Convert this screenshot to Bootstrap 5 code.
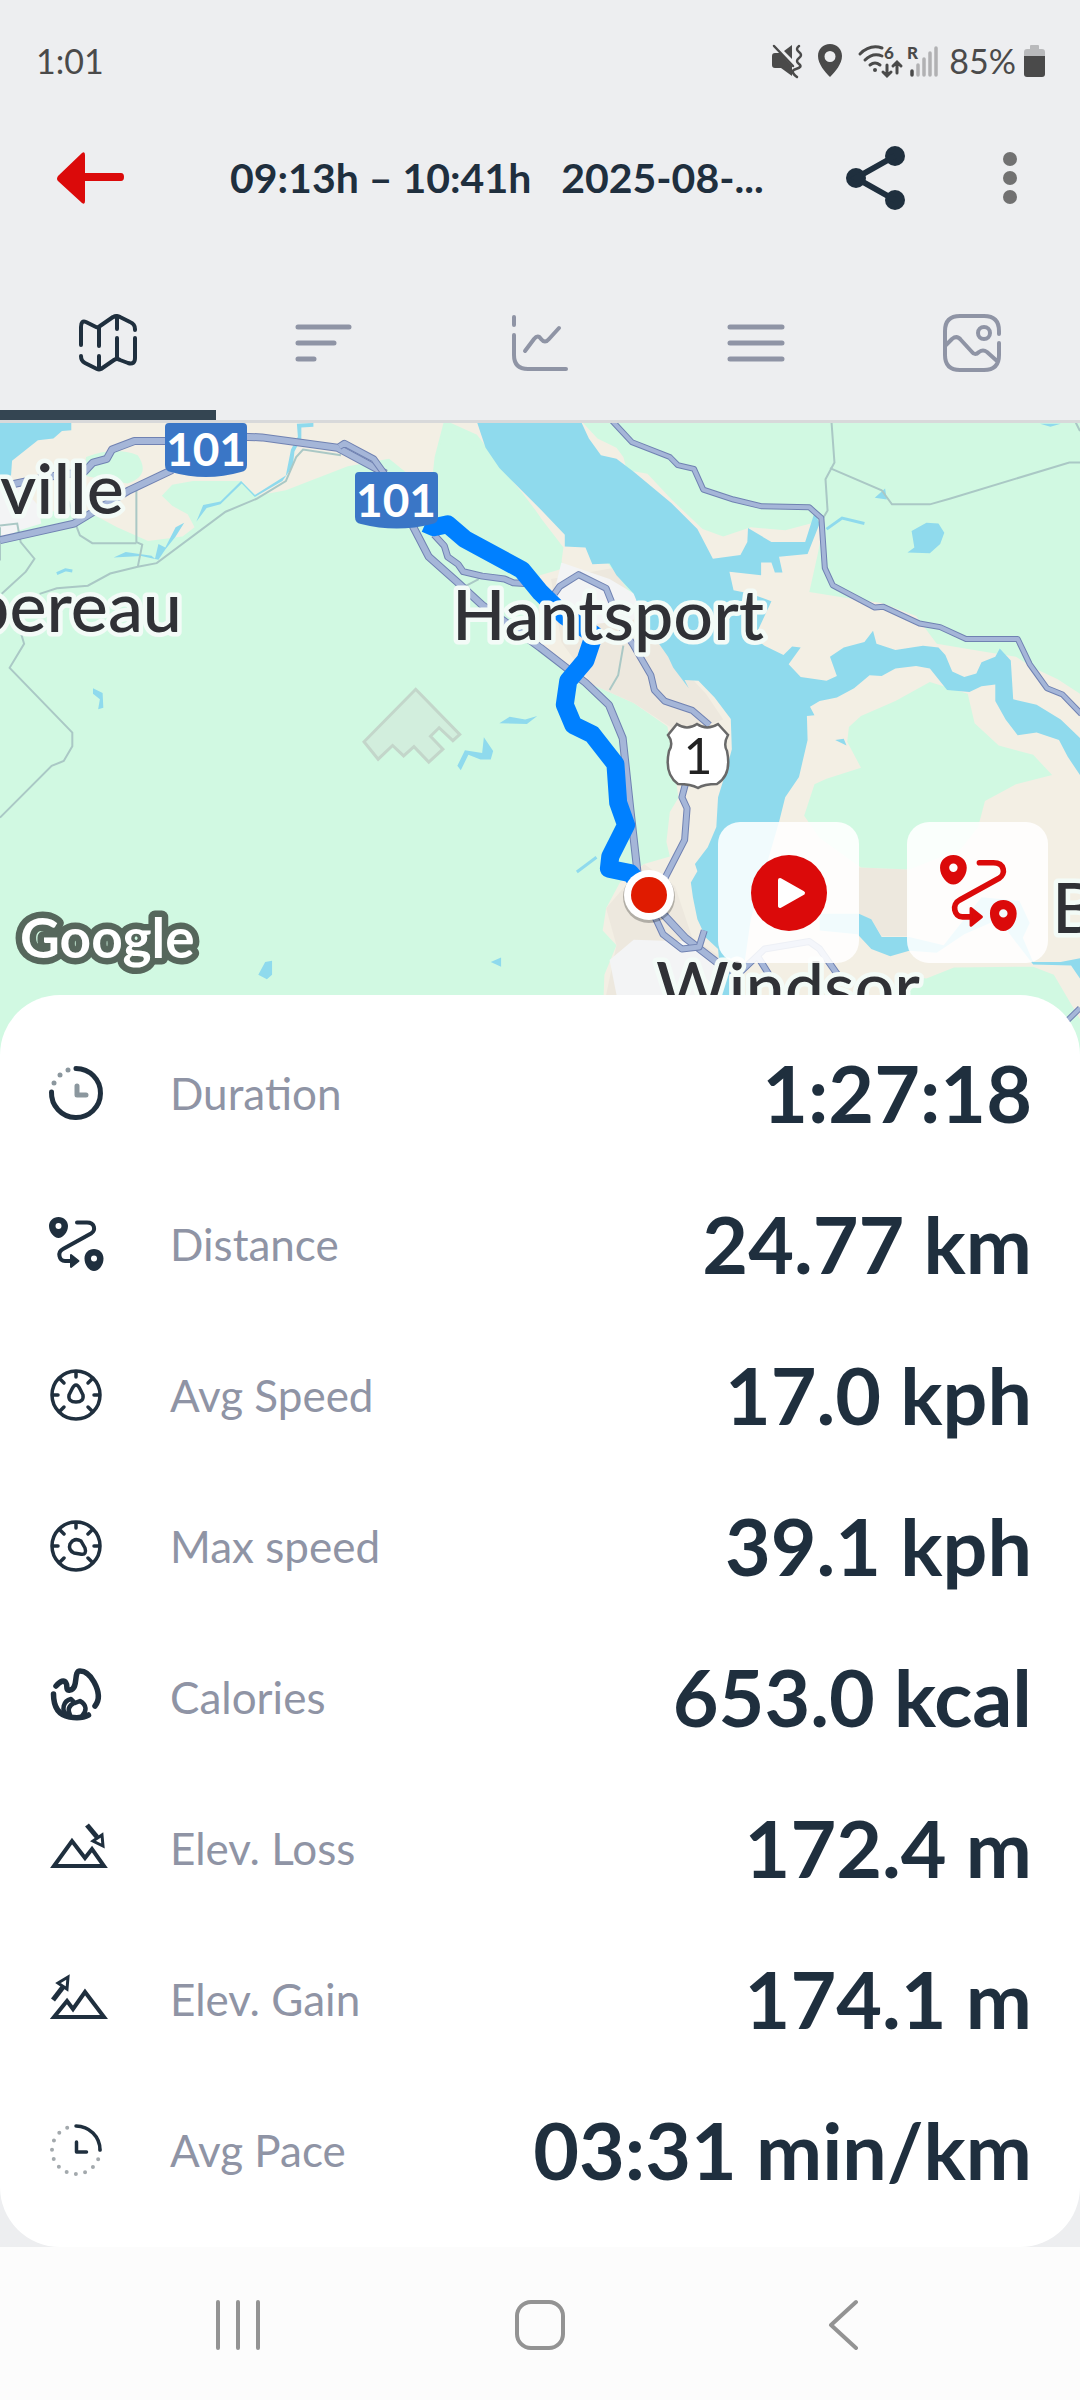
<!DOCTYPE html>
<html lang="en">
<head>
<meta charset="utf-8">
<meta name="viewport" content="width=device-width, initial-scale=1">
<title>Ride details</title>
<link href="https://cdn.jsdelivr.net/npm/bootstrap@5.3.0/dist/css/bootstrap.min.css" rel="stylesheet">
<script src="https://cdn.jsdelivr.net/npm/bootstrap@5.3.0/dist/js/bootstrap.bundle.min.js" defer></script>
<style>
:root{--ink:#1f2f3e;--muted:#8f94a5;--shell:#edeef0;--accent:#db0a0a}
body{font-family:Lato,"Open Sans",sans-serif;background:var(--shell);color:var(--ink)}
svg{display:block;flex:none}
button,a{color:inherit}
.status-bar{height:122px;padding:0 34px 0 36px;color:#4a4a4a;font-size:34px;line-height:40px}
.top-bar{height:112px;padding:0 46px 0 56px}
.ride-title{font-size:41px;line-height:56px;font-weight:700;margin:0;padding-left:106px}
.top-actions{gap:68px}
.plain-btn{background:none;border:0;padding:0}
.tab-strip{border-bottom:3px solid #d8d9da}
.tab-strip .nav-link{height:186px;padding:80px 0 0;border-radius:0;border-bottom:10px solid transparent;color:var(--muted)}
.tab-strip .nav-link.active{color:var(--ink);background:none;border-bottom-color:#344552}
.map-view{height:647px;background:#d1f9e2}
.map-shapes *{vector-effect:non-scaling-stroke}
.map-tools{right:32px;top:399px;gap:48px}
.map-tool{width:141px;height:141px;border:0;border-radius:22px;background:rgba(255,255,255,.88);color:var(--accent)}
.sheet{margin-top:-75px;border-radius:60px;padding:22px 48px 22px 44px}
.stat-row{height:151px;gap:62px}
.stat-name{font-size:44px;line-height:56px;color:var(--muted)}
.stat-value{font-size:79px;line-height:96px;font-weight:700;white-space:nowrap}
.system-nav{height:153px;padding:0 87px;background:#fcfcfc;color:#939393}
.place{font-size:70px;font-weight:500;fill:#303136;stroke:#f3fbf7;stroke-width:9;stroke-linejoin:round;paint-order:stroke}
.route-no{font-size:46px;font-weight:700;fill:#fff;text-anchor:middle}
.maker{font-size:55px;font-weight:700;fill:#fff;stroke:#56675c;stroke-width:13;stroke-linejoin:round;paint-order:stroke}
</style>
</head>
<body class="d-flex flex-column min-vh-100">
<svg width="0" height="0" class="position-absolute" aria-hidden="true">
  <symbol id="route" viewBox="0 0 64 64">
    <path fill="currentColor" fill-rule="evenodd" d="M14.500 5c5.500 0 9.500 4 9.500 9 0 6-5 12-9.500 12S5 20 5 14c0-5 4-9 9.500-9zm0 6a3 3 0 1 0 0 6 3 3 0 0 0 0-6zM50 37c5.500 0 9.500 4 9.500 9.500C59.500 53 55 59 50 59s-9.500-6-9.500-12.500C40.500 41 44.500 37 50 37zm0 6.500a3 3 0 1 0 0 6 3 3 0 0 0 0-6z"/>
    <path fill="none" stroke="currentColor" stroke-width="4" stroke-linecap="round" stroke-linejoin="round" d="M33 10.500H43c8 0 9 8 4 11L19 37c-6 3-4 12 2 12h8"/>
    <path fill="currentColor" stroke="currentColor" stroke-width="2" stroke-linejoin="round" d="M27 43l7.500 6-7.500 6z"/>
  </symbol>
  <symbol id="gauge" viewBox="0 0 64 64">
    <g fill="none" stroke="currentColor" stroke-width="3.500" stroke-linecap="round"><circle cx="32" cy="32" r="24"/><path d="M32 9v5M9 32h5M50 32h5M16 16l4 4M48 16l-4 4M16 48l4-4M48 48l-4-4"/></g>
  </symbol>
</svg>

<header>
  <div class="status-bar d-flex align-items-center justify-content-between">
    <span>1:01</span>
    <div class="d-flex align-items-center">
      <svg width="178" height="40" viewBox="0 0 178 40" fill="none" stroke="#4a4a4a" stroke-width="2.500" stroke-linecap="round">
        <path fill="#4a4a4a" stroke="none" d="M1 15q0-3 3-3h5L21 25v10L10 27H4q-3 0-3-3zM13 10l8-6v14z"/><path stroke-width="2.500" d="M3 5l19 20"/><path d="M28 5q-4 3 0 6t0 6 0 6-3 5 1 8"/>
        <path fill="#4a4a4a" stroke="none" fill-rule="evenodd" d="M59 3c7 0 12 5 12 12 0 8-7 16-12 21-5-5-12-13-12-21C47 8 52 3 59 3zm0 7a5.500 5.500 0 1 0 0 11 5.500 5.500 0 0 0 0-11z"/>
        <g stroke-width="3"><path d="M89 13q10-10 22-6M94 19q8-8 17-4M99 24q5-4 10 0M116 24v10m-4-3l4 4 4-4M126 32V22m-4 3l4-4 4 4"/></g><circle cx="104" cy="29" r="2" fill="#4a4a4a" stroke="none"/>
        <g stroke="none" fill="#4a4a4a" font-size="17" font-weight="900"><text x="113" y="18">6</text><text x="136" y="18">R</text></g>
        <g stroke="#b1b1b3" stroke-width="3.500"><path d="M147 24v10M153 18v16M159 12v22M165 7v27"/></g><path stroke-width="3.500" d="M141 30v4"/>
      </svg>
      <span class="me-2">85%</span>
      <svg width="22" height="34" viewBox="0 0 22 34"><path fill="#b9babc" d="M6 5V2q0-1 1-1h7q1 0 1 1v3h3q3 0 3 3v8H0V8q0-3 3-3z"/><path fill="#4a4a4a" d="M0 12h21v18q0 3-3 3H3q-3 0-3-3z"/></svg>
    </div>
  </div>
  <div class="top-bar d-flex align-items-center">
    <button class="plain-btn" aria-label="Back"><svg width="68" height="56" viewBox="0 0 68 56"><path fill="#db0a0a" d="M2 26L26 3q3-2 3 2v18h36q3 0 3 4t-3 4H29v20q0 4-3 2L2 31q-2-2 0-5z"/></svg></button>
    <h1 class="ride-title flex-grow-1 text-truncate">09:13h – 10:41h&nbsp;&nbsp; 2025-08-...</h1>
    <div class="top-actions d-flex align-items-center">
      <button class="plain-btn" aria-label="Share"><svg width="62" height="66" viewBox="0 0 62 66"><g fill="#1f2f3e"><circle cx="12" cy="33" r="10"/><circle cx="51" cy="11" r="10"/><circle cx="51" cy="55" r="10"/></g><path d="M51 11L12 33l39 22" fill="none" stroke="#1f2f3e" stroke-width="6"/></svg></button>
      <button class="plain-btn" aria-label="More options"><svg width="60" height="60" viewBox="0 0 60 60" fill="#717171"><circle cx="36" cy="11" r="7"/><circle cx="36" cy="30" r="7"/><circle cx="36" cy="49" r="7"/></svg></button>
    </div>
  </div>
  <nav class="tab-strip nav nav-fill" aria-label="Ride views">
    <a class="nav-link nav-item active d-flex justify-content-center col" href="#map" aria-label="Map"><svg width="58" height="58" viewBox="0 0 58 58" fill="none" stroke="currentColor" stroke-width="4" stroke-linecap="round" stroke-linejoin="round"><path d="M2 31V13q0-7 5-5l10 5q2 1 4-1l13-9q4-2 7 0l10 5q5 2 5 7v1M20 14v18M38 3v12M2 42q0 5 4 7l12 6q2 1 4 0l13-9q3-2 6 0l8 3q7 2 7-5V24M20 42v13M38 24v21"/></svg></a>
    <a class="nav-link nav-item d-flex justify-content-center col" href="#laps" aria-label="Laps"><svg width="58" height="58" viewBox="0 0 58 58" fill="none" stroke="currentColor" stroke-width="5" stroke-linecap="round"><path d="M3 13h51M3 29h36M3 45h16"/></svg></a>
    <a class="nav-link nav-item d-flex justify-content-center col" href="#charts" aria-label="Charts"><svg width="58" height="58" viewBox="0 0 58 58" fill="none" stroke="currentColor" stroke-width="4" stroke-linecap="round" stroke-linejoin="round"><path d="M3 3v8M3 21v20q0 14 14 14h38M14 37l9-12q4-5 7 0 4 5 8 0l10-11"/></svg></a>
    <a class="nav-link nav-item d-flex justify-content-center col" href="#splits" aria-label="Splits"><svg width="58" height="58" viewBox="0 0 58 58" fill="none" stroke="currentColor" stroke-width="5" stroke-linecap="round"><path d="M3 13h52M3 29h52M3 45h52"/></svg></a>
    <a class="nav-link nav-item d-flex justify-content-center col" href="#photos" aria-label="Photos"><svg width="58" height="58" viewBox="0 0 58 58" fill="none" stroke="currentColor" stroke-width="4" stroke-linecap="round" stroke-linejoin="round"><path d="M56 20V17Q56 2 41 2H17Q2 2 2 17v24q0 15 15 15h24q15 0 15-15V29M3 31l6-6q5-4 9 1l11 12q3 4 7 0 4-3 8 0l10 9"/><circle cx="41" cy="19" r="6"/></svg></a>
  </nav>
</header>

<main class="flex-grow-1">
  <section id="map" class="map-view position-relative overflow-hidden" aria-label="Route map">
    <svg width="100%" height="100%" viewBox="0 423 1080 647" preserveAspectRatio="xMidYMid slice">
      <g class="map-shapes" transform="translate(0 420) scale(.34439 .3699)">
        <!-- land -->
        <g fill="#f3efe4">
          <path d="M0 0H1290L1262 100 1255 160 1190 150 1130 105 1010 125 830 190 745 205 700 165 560 165 500 175 470 205 500 232 545 255 565 290 530 315 430 327 340 290 240 240 0 260z"/>
          <path d="M1290 0L1385 40 1568 262 1640 400 1568 420 1560 600 1720 715 1840 765 1940 830 2000 850 1990 990 1945 1060 1935 1140 1945 1180 1870 1200 1800 1250 1760 1320 1750 1380 1790 1420 1755 1500 1750 1620 2600 1620 2600 1400 2300 1100 2000 700 1700 300 1400 0z"/>
          <path d="M1685 0L1735 50 1790 75 1810 100 1820 135 1880 145 1950 215 2040 295 2100 315 2180 290 2280 298 2395 270 2375 360 2350 465 2450 480 2560 495 2660 530 2720 605 2850 625 2950 640 3000 670 3070 700 3136 740V1800H2100L1900 600z"/>
        </g>
        <path fill="#ede8de" d="M1600 430L1780 400 1960 650 2050 740 2100 810 1980 850 1840 765 1720 715 1630 600zM1760 1320L1870 1200 1960 1260 2010 1400 2090 1450 2080 1600 1750 1600 1790 1420zM2490 1210L2640 1215V1395H2560L2530 1350 2490 1335z"/>
        <g fill="#d1f9e2">
          <path d="M1290 20Q1460 110 1568 262L1568 420 1400 300 1255 160zM1568 262L1636 345 1630 385 1568 415zM250 100Q330 70 400 95 440 150 370 172L240 150z"/>
          <path d="M2700 708L2810 740 2830 820 2900 880 3000 905 3055 960 2950 985 2860 1030 2840 1100 2790 1160 2640 1215 2500 1210 2380 1130 2335 1070 2365 985 2400 970 2500 940 2460 870 2465 830 2500 800 2600 760z"/>
          <path d="M2590 1530L2650 1505 2690 1510 2770 1480 3000 1478 3060 1500 3136 1620V1800H2590z"/>
        </g>
        <g fill="#f3f4f5"><path d="M0 165L60 180 110 230 120 280 50 300 0 330zM1630 385L1770 430 1860 480 1840 540 1640 560 1600 500zM1770 1460L1840 1405 2000 1410 2080 1480 2060 1600H1800z"/></g>
        <!-- water -->
        <g fill="#8fdaed">
          <path d="M0 0H207V28L180 30 155 50 110 55 35 110 32 150 0 152z"/>
          <path d="M1383 0L1410 75 1450 130 1568 240 1640 310 1640 342 1700 345 1720 390 1770 388 1790 420 1840 470 1880 560 1940 640 1955 670 2000 725 1988 703 2028 705 2075 750 2122 808 2125 890 2105 960 2085 1020 2080 1100 2055 1155 2018 1200 2025 1220 2006 1250 2012 1290 2025 1350 2050 1400 2085 1430 2090 1480 2040 1600 2110 1600 2160 1480 2180 1350 2262 1087 2280 1020 2320 965 2345 865 2343 800 2365 798 2352 775 2380 760 2430 750 2480 725 2525 690 2560 692 2600 672 2660 665 2700 672 2750 730 2815 735 2850 720 2890 715 2890 760 2920 810 2955 852 3010 845 3075 865 3100 910 3136 960V860L3080 810 3010 770 2942 755 2935 650 2903 618 2890 640 2850 655 2835 685 2800 695 2765 680 2745 635 2725 615 2680 610 2600 622 2545 605 2535 570 2510 600 2450 615 2410 640 2430 692 2400 705 2325 695 2290 660 2325 615 2300 612 2275 635 2220 610 2190 590 2240 490 2180 470 2130 460 2118 410 2210 420 2210 385 2240 385 2250 412 2272 412 2262 370 2345 362 2380 280 2365 250 2338 330 2240 330 2172 292 2170 330 2150 365 2070 375 2025 295 1950 225 1840 140 1790 105 1745 95 1710 50 1685 0z"/>
          <path d="M2380 1335L2494 1335 2530 1350 2560 1398 2640 1398 2740 1420 2850 1290 2960 1300 2990 1360 2970 1400 3000 1465 3080 1465 3136 1455V1510L3110 1475 3000 1472 2940 1400 2900 1350 2800 1390 2720 1440 2640 1435 2585 1450 2530 1430 2490 1390 2380 1380z"/>
          <path d="M2647 300L2690 278 2725 280 2742 305 2730 335 2700 360 2635 358 2655 345zM2540 210L2570 185 2575 215zM2425 865L2450 862 2458 880zM3020 10H3080L3050 18z"/>
          <path d="M270 725L298 738 300 778 285 782 290 755 270 740zM1328 935L1350 893 1400 900 1405 858 1432 895 1425 918 1395 918 1360 905 1338 947zM1450 820L1480 802 1525 810 1560 800 1530 822zM750 1500L770 1465 790 1462V1500L775 1512zM1425 1465L1455 1453V1478z"/>
          <path d="M330 372L365 357 440 367 450 375 460 335 480 345 510 290 535 278 510 315 480 350 460 378 410 368zM570 275L590 230 640 220 700 165 740 203 830 150 845 80 865 45 862 10 910 8 910 18 875 20 875 50 855 85 850 125 820 165 740 208 702 172 640 228 600 238z"/>
        </g>
        <path fill="none" stroke="#8fdaed" stroke-width="3" d="M2400 295L2445 265 2510 280M1675 1222L1732 1182M165 415L190 405 210 408"/>
        <!-- quarry -->
        <path fill="#d2eedd" stroke="#c3d6ca" stroke-width="3" d="M1207 728L1335 850 1315 867 1275 832 1250 855 1286 890 1245 925 1202 883 1172 908 1140 880 1098 917 1057 870z"/>
        <!-- minor roads -->
        <g fill="none" stroke="#aac8c5" stroke-width="2">
          <path d="M115 470L165 455 255 448 320 415 400 397 455 387 655 248 745 213 830 165 860 100 880 80 990 95M396 190V330L413 337 400 397M396 333H268L232 312 215 270 200 220M0 285L50 280 60 330 100 375 75 410 5 470M0 290L0 380M62 580L70 605 28 670 210 845V882L185 922 150 935 0 1075"/>
          <path d="M2414 0L2423 115 2397 160 2403 245 2390 265M2410 130L2560 190 2590 228H2700L2760 212 3105 115H3136M3120 0L3136 30M1810 610L1795 690 1770 730M1350 450L1390 430"/>
        </g>
        <!-- highways -->
        <g fill="none" stroke-linejoin="round">
          <path stroke="#7082b2" stroke-width="8" d="M0 325L215 280 375 190 500 135M500 57L390 57 325 80 310 105 270 115 245 140 130 155 30 175M700 45L760 47 980 75 1120 145M1195 280L1245 370 1330 440 1400 500 1568 615 1700 710 1768 770 1808 860 1830 1050 1852 1230 1880 1290 1990 1400 2080 1465 2150 1500"/>
          <path stroke="#a5b6d8" stroke-width="6" d="M0 325L215 280 375 190 500 135M500 57L390 57 325 80 310 105 270 115 245 140 130 155 30 175M700 45L760 47 980 75 1120 145M1195 280L1245 370 1330 440 1400 500 1568 615 1700 710 1768 770 1808 860 1830 1050 1852 1230 1880 1290 1990 1400 2080 1465 2150 1500"/>
          <path stroke="#7082b2" stroke-width="7" d="M985 72L1000 63 1085 105 1120 150M1260 310L1290 340 1300 370 1330 390 1345 410 1400 422 1465 430 1490 440 1568 445M1610 470L1625 450 1680 418 1760 455 1775 490 1790 540 1840 610 1890 690 1900 730 1930 760 2010 785 2060 825M1990 985L1980 1020 1995 1050 1988 1135 1930 1240M1895 1330L1925 1390 1980 1430 2030 1425 2045 1380M2130 1510L2220 1430 2350 1410 2380 1430 2440 1510M2200 1450L2260 1540"/>
          <path stroke="#a5b6d8" stroke-width="5" d="M985 72L1000 63 1085 105 1120 150M1260 310L1290 340 1300 370 1330 390 1345 410 1400 422 1465 430 1490 440 1568 445M1610 470L1625 450 1680 418 1760 455 1775 490 1790 540 1840 610 1890 690 1900 730 1930 760 2010 785 2060 825M1990 985L1980 1020 1995 1050 1988 1135 1930 1240M1895 1330L1925 1390 1980 1430 2030 1425 2045 1380M2130 1510L2220 1430 2350 1410 2380 1430 2440 1510M2200 1450L2260 1540"/>
          <path stroke="#7082b2" stroke-width="6" d="M1775 0L1835 60 1945 100 1968 122 2015 132 2042 188 2130 215 2210 233 2350 236 2385 265 2395 400 2418 447 2540 507 2565 505 2670 550 2730 560 2805 592 2955 592 2990 660 3040 725 3085 742 3140 795M3070 1650L3136 1590"/>
          <path stroke="#a5b6d8" stroke-width="4" d="M1775 0L1835 60 1945 100 1968 122 2015 132 2042 188 2130 215 2210 233 2350 236 2385 265 2395 400 2418 447 2540 507 2565 505 2670 550 2730 560 2805 592 2955 592 2990 660 3040 725 3085 742 3140 795M3070 1650L3136 1590"/>
        </g>
        <!-- recorded track -->
        <path fill="none" stroke="#0080ff" stroke-width="18" stroke-linejoin="round" d="M1235 280L1260 290 1300 282 1350 322 1515 405 1568 465 1640 530 1725 580 1700 650 1650 705 1640 770 1665 825 1720 850 1787 930 1795 1035 1818 1095 1772 1180 1768 1213 1830 1225 1885 1285"/>
      </g>
      <g fill="#3a76c6"><path d="M169 423H243q4 0 4 4v38q0 6-6 7-35 10-70 0-6-1-6-7v-38q0-4 4-4z"/><path d="M359 472h75q4 0 4 4v41q0 6-6 7-35 9-71 0-6-1-6-7v-41q0-4 4-4z"/></g>
      <text class="route-no" x="206" y="466">101</text>
      <text class="route-no" x="396" y="517">101</text>
      <path fill="#fff" stroke="#696969" stroke-width="2.500" d="M677 724q10 7 20 0 10 7 21 0l10 11q-5 9-1 16 5 24-10 33-13 0-19 4-7-4-20-4-14-10-9-33 5-8-1-16z"/>
      <text x="698" y="774" font-size="50" text-anchor="middle" fill="#222">1</text>
      <text class="place" x="0" y="514">ville</text>
      <text class="place" x="182" y="632" text-anchor="end">pereau</text>
      <text class="place" x="452" y="640">Hantsport</text>
      <text class="place" x="656" y="1012">Windsor</text>
      <text class="place" x="1052" y="933">B</text>
      <text class="maker" x="20" y="958">Google</text>
      <circle cx="649" cy="897" r="26" fill="#000" opacity=".25"/><circle cx="649" cy="895" r="25" fill="#fff"/><circle cx="649" cy="895" r="18" fill="#e01b00"/>
    </svg>
    <div class="map-tools position-absolute d-flex">
      <button class="map-tool d-flex align-items-center justify-content-center" aria-label="Play route"><svg width="78" height="78" viewBox="0 0 78 78"><circle cx="39" cy="39" r="38" fill="#db0a0a"/><path fill="#fff" stroke="#fff" stroke-width="4" stroke-linejoin="round" d="M30 26l23 13-23 13z"/></svg></button>
      <button class="map-tool d-flex align-items-center justify-content-center" aria-label="Show route"><svg width="90" height="90"><use href="#route"/></svg></button>
    </div>
  </section>

  <section class="sheet bg-white position-relative">
    <ul class="list-unstyled mb-0">
      <li class="stat-row d-flex align-items-center">
        <svg width="64" height="64" viewBox="0 0 64 64" fill="none" stroke="currentColor" stroke-width="5" stroke-linecap="round" stroke-linejoin="round"><path d="M32 7.500A24.500 24.500 0 1 1 7.500 31"/><path stroke="#8b979e" d="M33 25v9h9"/><g fill="#8b979e" stroke="none"><circle cx="24" cy="9" r="2.500"/><circle cx="16" cy="14" r="2.500"/><circle cx="10" cy="22" r="2.500"/></g></svg>
        <span class="stat-name">Duration</span><span class="stat-value ms-auto">1:27:18</span></li>
      <li class="stat-row d-flex align-items-center">
        <svg width="64" height="64"><use href="#route"/></svg>
        <span class="stat-name">Distance</span><span class="stat-value ms-auto">24.77 km</span></li>
      <li class="stat-row d-flex align-items-center">
        <svg width="64" height="64" viewBox="0 0 64 64"><use href="#gauge"/><path fill="none" stroke="currentColor" stroke-width="3.500" stroke-linejoin="round" d="M32 22q2 0 4 4l3 6q1 7-7 7t-7-7l3-6q2-4 4-4z"/></svg>
        <span class="stat-name">Avg Speed</span><span class="stat-value ms-auto">17.0 kph</span></li>
      <li class="stat-row d-flex align-items-center">
        <svg width="64" height="64" viewBox="0 0 64 64"><use href="#gauge"/><path fill="none" stroke="currentColor" stroke-width="3.500" stroke-linejoin="round" d="M41 39q-1 2-5 1l-6-1q-6-3-4-9 4-7 11-3l4 7q1 3 0 5z"/></svg>
        <span class="stat-name">Max speed</span><span class="stat-value ms-auto">39.1 kph</span></li>
      <li class="stat-row d-flex align-items-center">
        <svg width="64" height="64" viewBox="0 0 64 64" fill="none" stroke="currentColor" stroke-width="5.500" stroke-linecap="round" stroke-linejoin="round"><path d="M12 21q7-8 10-3c2 3-1 8 4 7 9-1 3-19 10-19q8 0 14 11c6 11 5 19 1 24M9.500 29c0 13 5 21 16 23q12 2 19-2"/><path stroke-width="4.500" d="M23 51c-6-6-4-15 4-17l4 4 5-2c7 4 7 10 2 15M30 38q-8 4-4 12"/></svg>
        <span class="stat-name">Calories</span><span class="stat-value ms-auto">653.0 kcal</span></li>
      <li class="stat-row d-flex align-items-center">
        <svg width="64" height="64" viewBox="0 0 64 64" fill="none" stroke="currentColor" stroke-width="4"><path d="M10 50l18-25 13 17 7-9 12 17z"/><path stroke-width="5" d="M43 9l10 12"/><path stroke-width="3" d="M49 25l9-6 1 11z"/></svg>
        <span class="stat-name">Elev. Loss</span><span class="stat-value ms-auto">172.4 m</span></li>
      <li class="stat-row d-flex align-items-center">
        <svg width="64" height="64" viewBox="0 0 64 64" fill="none" stroke="currentColor" stroke-width="4"><path d="M10 50l13-16 6 8 12-17 19 25z"/><path stroke-width="5" d="M9 33l10-13"/><path stroke-width="3" d="M14 16l10-6-1 12z"/></svg>
        <span class="stat-name">Elev. Gain</span><span class="stat-value ms-auto">174.1 m</span></li>
      <li class="stat-row d-flex align-items-center">
        <svg width="64" height="64" viewBox="0 0 64 64" fill="none" stroke="currentColor" stroke-width="3.500" stroke-linecap="round" stroke-linejoin="round"><path stroke="#a3a9ad" stroke-width="4" stroke-dasharray="0 9.400" d="M56 32A24 24 0 1 1 32 8"/><path d="M32 8a24 24 0 0 1 24 24M32.500 24v10h10"/></svg>
        <span class="stat-name">Avg Pace</span><span class="stat-value ms-auto">03:31 min/km</span></li>
    </ul>
  </section>
</main>

<footer class="system-nav d-flex align-items-center">
  <button class="plain-btn col d-flex justify-content-center" aria-label="Recent apps"><svg width="50" height="52" viewBox="0 0 50 52" stroke="currentColor" stroke-width="4" stroke-linecap="round"><path d="M5 4v46M25 4v46M45 4v46"/></svg></button>
  <button class="plain-btn col d-flex justify-content-center" aria-label="Home"><svg width="52" height="52" viewBox="0 0 52 52" fill="none" stroke="currentColor" stroke-width="4"><rect x="3" y="4" width="46" height="46" rx="14"/></svg></button>
  <button class="plain-btn col d-flex justify-content-center" aria-label="Back"><svg width="52" height="52" viewBox="0 0 52 52" fill="none" stroke="currentColor" stroke-width="4" stroke-linecap="round" stroke-linejoin="round"><path d="M40 4L15 27l25 23"/></svg></button>
</footer>
</body>
</html>
